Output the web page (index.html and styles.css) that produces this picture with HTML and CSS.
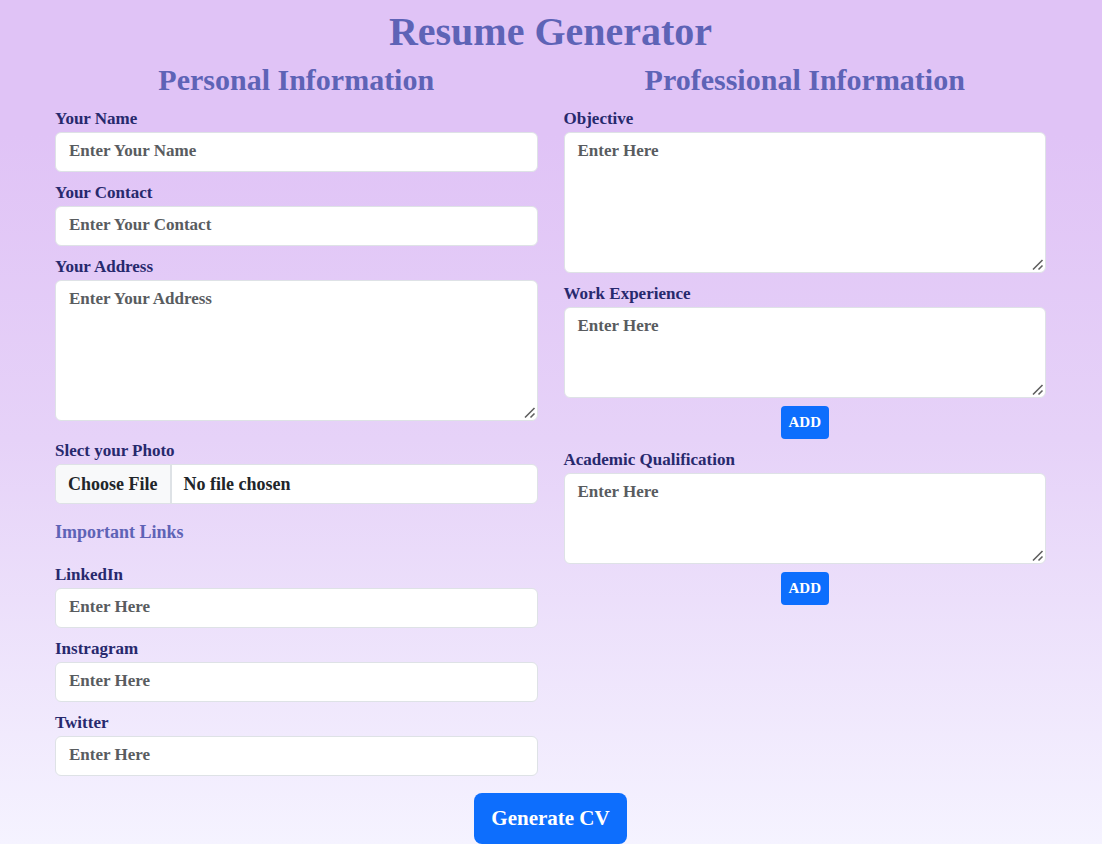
FILE: index.html
```html
<!DOCTYPE html>
<html lang="en">
<head>
<meta charset="utf-8">
<meta name="viewport" content="width=device-width, initial-scale=1">
<title>Resume Generator</title>
<link rel="stylesheet" href="styles.css">
</head>
<body>
<main class="page">
  <form class="container">
    <h1 class="title">Resume Generator</h1>
    <div class="row">
      <section class="col">
        <h2 class="heading">Personal Information</h2>
        <div class="field">
          <label class="label" for="name">Your Name</label>
          <input class="control" id="name" type="text" placeholder="Enter Your Name">
        </div>
        <div class="field">
          <label class="label" for="contact">Your Contact</label>
          <input class="control" id="contact" type="text" placeholder="Enter Your Contact">
        </div>
        <div class="field">
          <label class="label" for="address">Your Address</label>
          <textarea class="control tall" id="address" placeholder="Enter Your Address"></textarea>
        </div>
        <div class="field photo">
          <label class="label" for="photo">Slect your Photo</label>
          <input class="control file" id="photo" type="file">
        </div>
        <p class="links">Important Links</p>
        <div class="field">
          <label class="label" for="linkedin">LinkedIn</label>
          <input class="control" id="linkedin" type="text" placeholder="Enter Here">
        </div>
        <div class="field">
          <label class="label" for="instagram">Instragram</label>
          <input class="control" id="instagram" type="text" placeholder="Enter Here">
        </div>
        <div class="field">
          <label class="label" for="twitter">Twitter</label>
          <input class="control" id="twitter" type="text" placeholder="Enter Here">
        </div>
      </section>
      <section class="col">
        <h2 class="heading">Professional Information</h2>
        <div class="field">
          <label class="label" for="objective">Objective</label>
          <textarea class="control tall" id="objective" placeholder="Enter Here"></textarea>
        </div>
        <div class="field">
          <label class="label" for="work">Work Experience</label>
          <textarea class="control short" id="work" placeholder="Enter Here"></textarea>
        </div>
        <div class="center"><button class="btn small" type="button">ADD</button></div>
        <div class="field">
          <label class="label" for="academic">Academic Qualification</label>
          <textarea class="control short" id="academic" placeholder="Enter Here"></textarea>
        </div>
        <div class="center"><button class="btn small" type="button">ADD</button></div>
      </section>
    </div>
    <div class="submit"><button class="btn large" type="button">Generate CV</button></div>
  </form>
</main>
</body>
</html>
```
FILE: styles.css
```css
* { box-sizing: border-box; }
body {
  margin: 0;
  background: #fff;
  font-family: "Liberation Serif", serif;
  font-weight: 700;
  font-size: 17px;
  line-height: 24px;
}
.page { background: linear-gradient(#e0c3f6 0%, #e0c3f6 16%, #e6d2f8 52%, #f5f3ff 100%); }
.container { padding: 0 44px 0 43px; }
.title, .heading { margin: 0; text-align: center; color: #5e63b6; }
.title { font-size: 40px; line-height: 48px; padding-top: 8px; }
.heading { font-size: 30px; line-height: 36px; margin: 6px 0 8px; }
.row { display: grid; grid-template-columns: 1fr 1fr; gap: 2px; }
.col { padding: 0 12px; }
.field { display: flex; flex-direction: column; margin-bottom: 8px; }
.label { color: #27296d; line-height: 26px; }
.control {
  display: block;
  width: 100%;
  height: 40px;
  padding: 6px 13px 8px;
  border: 1px solid #dee2e6;
  border-radius: 6px;
  background: #fff;
  color: #212529;
  font: inherit;
}
.control::placeholder { color: #595c5f; opacity: 1; }
.tall { height: 141px; }
.short { height: 91px; }
textarea.control { resize: vertical; }
textarea.control::-webkit-resizer {
  background: url("data:image/svg+xml,%3Csvg xmlns='http://www.w3.org/2000/svg' width='15' height='15' fill='none' stroke='%23606060' stroke-width='1.6'%3E%3Cpath d='M3 12.5 12.5 3M8.500 12.500 12.500 8.500'/%3E%3C/svg%3E") no-repeat right bottom;
}
.photo { margin: 17px 0 16px; }
.control.file { padding: 0; line-height: 36px; font-size: 18px; overflow: hidden; }
.file::file-selector-button {
  height: 38px;
  margin: 0 12px 0 0;
  padding: 0 12px;
  border: 0;
  border-right: 2px solid #dee2e6;
  background: #f8f9fa;
  color: #212529;
  font: inherit;
}
.links { margin: 0 0 18px; color: #5e63b6; font-size: 18px; }
.center { display: flex; justify-content: center; margin-bottom: 8px; }
.btn { border: 0; background: #0d6efd; color: #fff; font: inherit; cursor: pointer; }
.small { padding: 5px 8px; border-radius: 4px; font-size: 15px; line-height: 23px; }
.large { padding: 10px 17px; border-radius: 8px; font-size: 21px; line-height: 31px; }
.submit { display: flex; justify-content: center; padding-top: 9px; }
```
